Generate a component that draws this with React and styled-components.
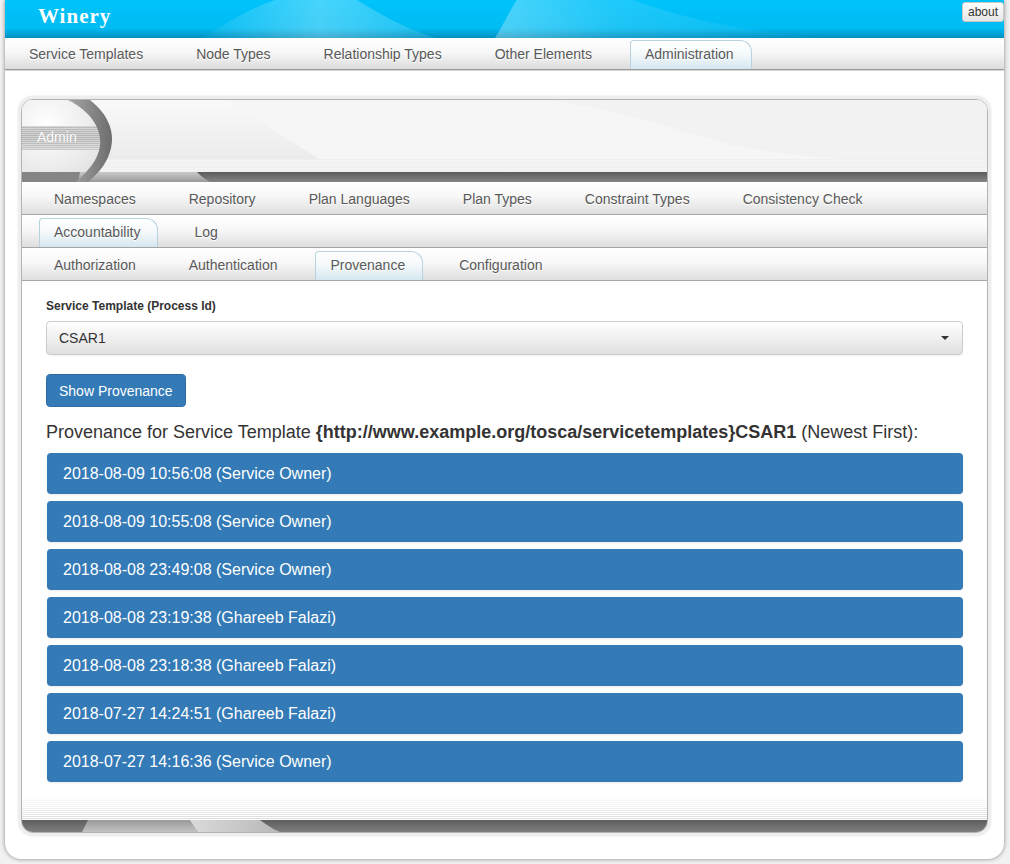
import React from 'react';
import styled, { createGlobalStyle, css } from 'styled-components';

const GlobalStyle = createGlobalStyle`
  html, body {
    margin: 0;
    padding: 0;
    background: #f1f1f1;
  }
  body {
    font-family: "Liberation Sans", Arial, sans-serif;
    color: #333;
  }
  * {
    box-sizing: border-box;
  }
`;

const Page = styled.div`
  margin: 0 6px 4px 5px;
  background: #fff;
  border-radius: 0 0 16px 16px;
  box-shadow: 0 0 4px rgba(0, 0, 0, 0.45);
  overflow: hidden;
`;

const Header = styled.header`
  position: relative;
  height: 38px;
  padding: 4px 0 0 33px;
`;

const ArtLayer = styled.svg`
  position: absolute;
  inset: 0;
  width: 100%;
  height: 100%;
  display: block;
`;

const Logo = styled.div`
  position: relative;
  font-family: "Liberation Serif", "DejaVu Serif", serif;
  font-weight: bold;
  font-size: 21px;
  letter-spacing: 1px;
  color: #fff;
  line-height: 24px;
`;

const AboutButton = styled.button`
  position: absolute;
  top: 2px;
  right: 0;
  height: 20px;
  padding: 0 5px;
  font-family: "Liberation Sans", Arial, sans-serif;
  font-size: 12px;
  color: #333;
  background: linear-gradient(#ffffff, #e6e6e6);
  border: 1px solid #c8c8c8;
  border-radius: 3px;
`;

const MainNav = styled.nav`
  display: flex;
  gap: 23px;
  height: 32px;
  padding-left: 9px;
  background: linear-gradient(#ffffff 0%, #f8f8f8 45%, #dcdcdc 100%);
  border-bottom: 1px solid #9a9a9a;
  box-shadow: 0 1px 0 #d6d6d6;
`;

const SubNav = styled.div`
  display: flex;
  gap: 23px;
  height: 33px;
  padding-left: 17px;
  background: linear-gradient(#ffffff 0%, #f7f7f7 45%, #dedede 100%);
  border-top: 1px solid #fff;
  border-bottom: 1px solid #a6a6a6;
`;

const NavItem = styled.div`
  display: flex;
  align-items: center;
  padding: 0 15px;
  font-size: 14px;
  color: #595959;
  text-shadow: 0 1px 0 #fff;
  white-space: nowrap;

  ${({ $active }) =>
    $active &&
    css`
      margin-top: 2px;
      margin-right: -2px;
      padding: 0 17px 2px 14px;
      border: 1px solid #b8d2df;
      border-bottom: none;
      border-radius: 4px 12px 0 0;
      background: linear-gradient(#ffffff 0%, #f5f9fb 45%, #d5e7f0 100%);
    `}
`;

const Main = styled.main`
  padding: 26px 13px 23px 13px;
`;

const Panel = styled.section`
  padding: 3px;
  background: #eeeeee;
  border-radius: 15px;
  box-shadow: 0 0 2px rgba(0, 0, 0, 0.12);
`;

const PanelInner = styled.div`
  border: 1px solid #b3b3b3;
  border-radius: 12px;
  overflow: hidden;
  background: #fff;
`;

const Banner = styled.div`
  position: relative;
  height: 82px;
  padding: 28px 0 0 15px;
`;

const BannerTitle = styled.div`
  position: relative;
  font-size: 14px;
  line-height: 18px;
  color: #ffffff;
  text-shadow: 0 0 1px rgba(0, 0, 0, 0.12);
`;

const Content = styled.div`
  padding: 17px 24px 13px 24px;
`;

const FieldLabel = styled.label`
  display: block;
  font-size: 12px;
  font-weight: bold;
  line-height: 16px;
  margin-bottom: 7px;
`;

const SelectBox = styled.div`
  display: flex;
  align-items: center;
  justify-content: space-between;
  height: 34px;
  padding: 0 13px 0 12px;
  font-size: 14px;
  color: #333;
  background: linear-gradient(#ffffff, #e0e0e0);
  border: 1px solid #cccccc;
  border-radius: 4px;
  box-shadow: 0 1px 1px rgba(0, 0, 0, 0.05);
`;

const Caret = styled.span`
  width: 0;
  height: 0;
  border-top: 4px solid #333;
  border-left: 4px solid transparent;
  border-right: 4px solid transparent;
`;

const PrimaryButton = styled.button`
  display: block;
  margin-top: 19px;
  height: 33px;
  padding: 0 12px;
  font-family: "Liberation Sans", Arial, sans-serif;
  font-size: 14px;
  color: #fff;
  background: #337ab7;
  border: 1px solid #2e6da4;
  border-radius: 4px;
`;

const Heading = styled.h4`
  margin: 14px 0 0 0;
  font-size: 18px;
  font-weight: normal;
  line-height: 22px;
  color: #333;

  strong {
    font-weight: bold;
  }
`;

const EntryList = styled.div`
  display: flex;
  flex-direction: column;
  gap: 7px;
  margin-top: 10px;
`;

const Entry = styled.div`
  display: flex;
  align-items: center;
  height: 41px;
  margin-left: 1px;
  padding-left: 16px;
  font-size: 16px;
  color: #fff;
  background: #337ab7;
  border-radius: 4px;
  box-shadow: 0 1px 2px rgba(0, 0, 0, 0.08);
`;

const PanelFooter = styled.div`
  height: 37px;
  display: flex;
  flex-direction: column;
`;

const FooterStripes = styled.div`
  flex: 1;
  background:
    repeating-linear-gradient(#ffffff 0 1px, transparent 1px 2px),
    linear-gradient(#ffffff 0%, #f4f4f4 40%, #dcdcdc 100%);
`;

const FooterBar = styled.div`
  position: relative;
  height: 12px;
  background: linear-gradient(#5e5e5e, #7e7e7e);
`;

const topNav = [
  'Service Templates',
  'Node Types',
  'Relationship Types',
  'Other Elements',
  'Administration',
];

const adminRows = [
  {
    items: ['Namespaces', 'Repository', 'Plan Languages', 'Plan Types', 'Constraint Types', 'Consistency Check'],
    active: null,
  },
  { items: ['Accountability', 'Log'], active: 'Accountability' },
  { items: ['Authorization', 'Authentication', 'Provenance', 'Configuration'], active: 'Provenance' },
];

const entries = [
  '2018-08-09 10:56:08 (Service Owner)',
  '2018-08-09 10:55:08 (Service Owner)',
  '2018-08-08 23:49:08 (Service Owner)',
  '2018-08-08 23:19:38 (Ghareeb Falazi)',
  '2018-08-08 23:18:38 (Ghareeb Falazi)',
  '2018-07-27 14:24:51 (Ghareeb Falazi)',
  '2018-07-27 14:16:36 (Service Owner)',
];

const HeaderSwoosh = () => (
  <ArtLayer viewBox="0 0 999 38" preserveAspectRatio="none">
    <defs>
      <linearGradient id="hdBase" x1="0" y1="0" x2="0" y2="1">
        <stop offset="0" stopColor="#00c3fb" />
        <stop offset="0.74" stopColor="#00bcf3" />
        <stop offset="1" stopColor="#008fc0" />
      </linearGradient>
      <linearGradient id="hdGloss" x1="0" y1="0" x2="1" y2="0">
        <stop offset="0" stopColor="#ffffff" stopOpacity="0.04" />
        <stop offset="0.5" stopColor="#ffffff" stopOpacity="0.28" />
        <stop offset="1" stopColor="#ffffff" stopOpacity="0.1" />
      </linearGradient>
      <linearGradient id="hdGloss2" x1="0" y1="0" x2="1" y2="0">
        <stop offset="0" stopColor="#ffffff" stopOpacity="0.3" />
        <stop offset="0.35" stopColor="#ffffff" stopOpacity="0.12" />
        <stop offset="1" stopColor="#ffffff" stopOpacity="0" />
      </linearGradient>
    </defs>
    <rect width="999" height="38" fill="url(#hdBase)" />
    <path d="M198,38 C222,22 246,8 270,0 L352,0 C376,15 400,28 430,38 Z" fill="url(#hdGloss)" />
    <path d="M490,38 C500,22 506,8 512,0 L628,0 C690,22 750,34 830,38 Z" fill="url(#hdGloss2)" />
  </ArtLayer>
);

const BannerDecor = () => (
  <ArtLayer viewBox="0 0 965 82" preserveAspectRatio="none">
    <defs>
      <linearGradient id="bnBg" x1="0" y1="0" x2="0" y2="1">
        <stop offset="0" stopColor="#f9f9f9" />
        <stop offset="1" stopColor="#e8e8e8" />
      </linearGradient>
      <linearGradient id="bnRing" x1="0" y1="0" x2="1" y2="0">
        <stop offset="0" stopColor="#a6a6a6" />
        <stop offset="1" stopColor="#6c6c6c" />
      </linearGradient>
      <linearGradient id="bnBar" x1="0" y1="0" x2="0" y2="1">
        <stop offset="0" stopColor="#5c5c5c" />
        <stop offset="1" stopColor="#858585" />
      </linearGradient>
      <linearGradient id="bnBarLight" x1="0" y1="0" x2="0" y2="1">
        <stop offset="0" stopColor="#c9c9c9" />
        <stop offset="1" stopColor="#9a9a9a" />
      </linearGradient>
      <linearGradient id="bnStripe" x1="0" y1="0" x2="0" y2="1">
        <stop offset="0" stopColor="#bdbdbd" />
        <stop offset="0.5" stopColor="#b3b3b3" />
        <stop offset="1" stopColor="#cacaca" />
      </linearGradient>
      <radialGradient id="bnKnob" cx="0.3" cy="0.3" r="0.8">
        <stop offset="0" stopColor="#ffffff" />
        <stop offset="1" stopColor="#e2e2e2" />
      </radialGradient>
      <pattern id="bnLines" width="4" height="2" patternUnits="userSpaceOnUse">
        <rect width="4" height="1" fill="#ffffff" opacity="0.4" />
      </pattern>
    </defs>
    <rect width="965" height="72" fill="url(#bnBg)" />
    <path d="M205,0 L300,61 L965,61 L965,0 Z" fill="#f6f6f6" />
    <path d="M520,0 C600,8 650,30 710,45 C770,57 830,61 880,61 L965,61 L965,0 Z" fill="#f2f2f2" />
    <rect y="59" width="965" height="13" fill="#efefef" />
    <rect y="59" width="965" height="13" fill="url(#bnLines)" />
    <path d="M0,0 L58,0 C78,14 84,30 82,46 C80,60 72,72 60,82 L0,82 Z" fill="url(#bnKnob)" />
    <rect y="26" width="78" height="24" fill="url(#bnStripe)" />
    <rect y="26" width="78" height="24" fill="url(#bnLines)" />
    <rect y="72" width="965" height="10" fill="url(#bnBar)" />
    <path d="M0,72 L175,72 C178,75 182,79 188,82 L0,82 Z" fill="url(#bnBarLight)" />
    <path d="M0,72 L58,72 L56,82 L0,82 Z" fill="#858585" />
    <path
      d="M46,0 L68,0 C86,14 93,32 89,48 C86,62 77,73 66,82 L54,82 C66,71 76,60 78,46 C80,30 70,12 46,0 Z"
      fill="url(#bnRing)"
    />
  </ArtLayer>
);

const FooterDecor = () => (
  <ArtLayer viewBox="0 0 965 12" preserveAspectRatio="none">
    <defs>
      <linearGradient id="ftLight" x1="0" y1="0" x2="0" y2="1">
        <stop offset="0" stopColor="#9a9a9a" />
        <stop offset="1" stopColor="#c2c2c2" />
      </linearGradient>
      <linearGradient id="ftLight2" x1="0" y1="0" x2="1" y2="0">
        <stop offset="0" stopColor="#dadada" />
        <stop offset="1" stopColor="#b8b8b8" />
      </linearGradient>
    </defs>
    <path d="M60,12 L66,0 L170,0 L176,12 Z" fill="url(#ftLight)" />
    <path d="M168,0 L238,0 C244,4 250,9 258,12 L176,12 Z" fill="url(#ftLight2)" />
  </ArtLayer>
);

const App = () => {
  return (
    <>
      <GlobalStyle />
      <Page>
        <Header>
          <HeaderSwoosh />
          <Logo>Winery</Logo>
          <AboutButton>about</AboutButton>
        </Header>

        <MainNav>
          {topNav.map((label) => (
            <NavItem key={label} $active={label === 'Administration'}>
              {label}
            </NavItem>
          ))}
        </MainNav>

        <Main>
          <Panel>
            <PanelInner>
              <Banner>
                <BannerDecor />
                <BannerTitle>Admin</BannerTitle>
              </Banner>

              {adminRows.map((row, i) => (
                <SubNav key={i}>
                  {row.items.map((label) => (
                    <NavItem key={label} $active={label === row.active}>
                      {label}
                    </NavItem>
                  ))}
                </SubNav>
              ))}

              <Content>
                <FieldLabel>Service Template (Process Id)</FieldLabel>
                <SelectBox>
                  <span>CSAR1</span>
                  <Caret />
                </SelectBox>
                <PrimaryButton>Show Provenance</PrimaryButton>
                <Heading>
                  Provenance for Service Template{' '}
                  <strong>{'{http://www.example.org/tosca/servicetemplates}CSAR1'}</strong> (Newest First):
                </Heading>
                <EntryList>
                  {entries.map((entry) => (
                    <Entry key={entry}>{entry}</Entry>
                  ))}
                </EntryList>
              </Content>

              <PanelFooter>
                <FooterStripes />
                <FooterBar>
                  <FooterDecor />
                </FooterBar>
              </PanelFooter>
            </PanelInner>
          </Panel>
        </Main>
      </Page>
    </>
  );
};

export default App;
